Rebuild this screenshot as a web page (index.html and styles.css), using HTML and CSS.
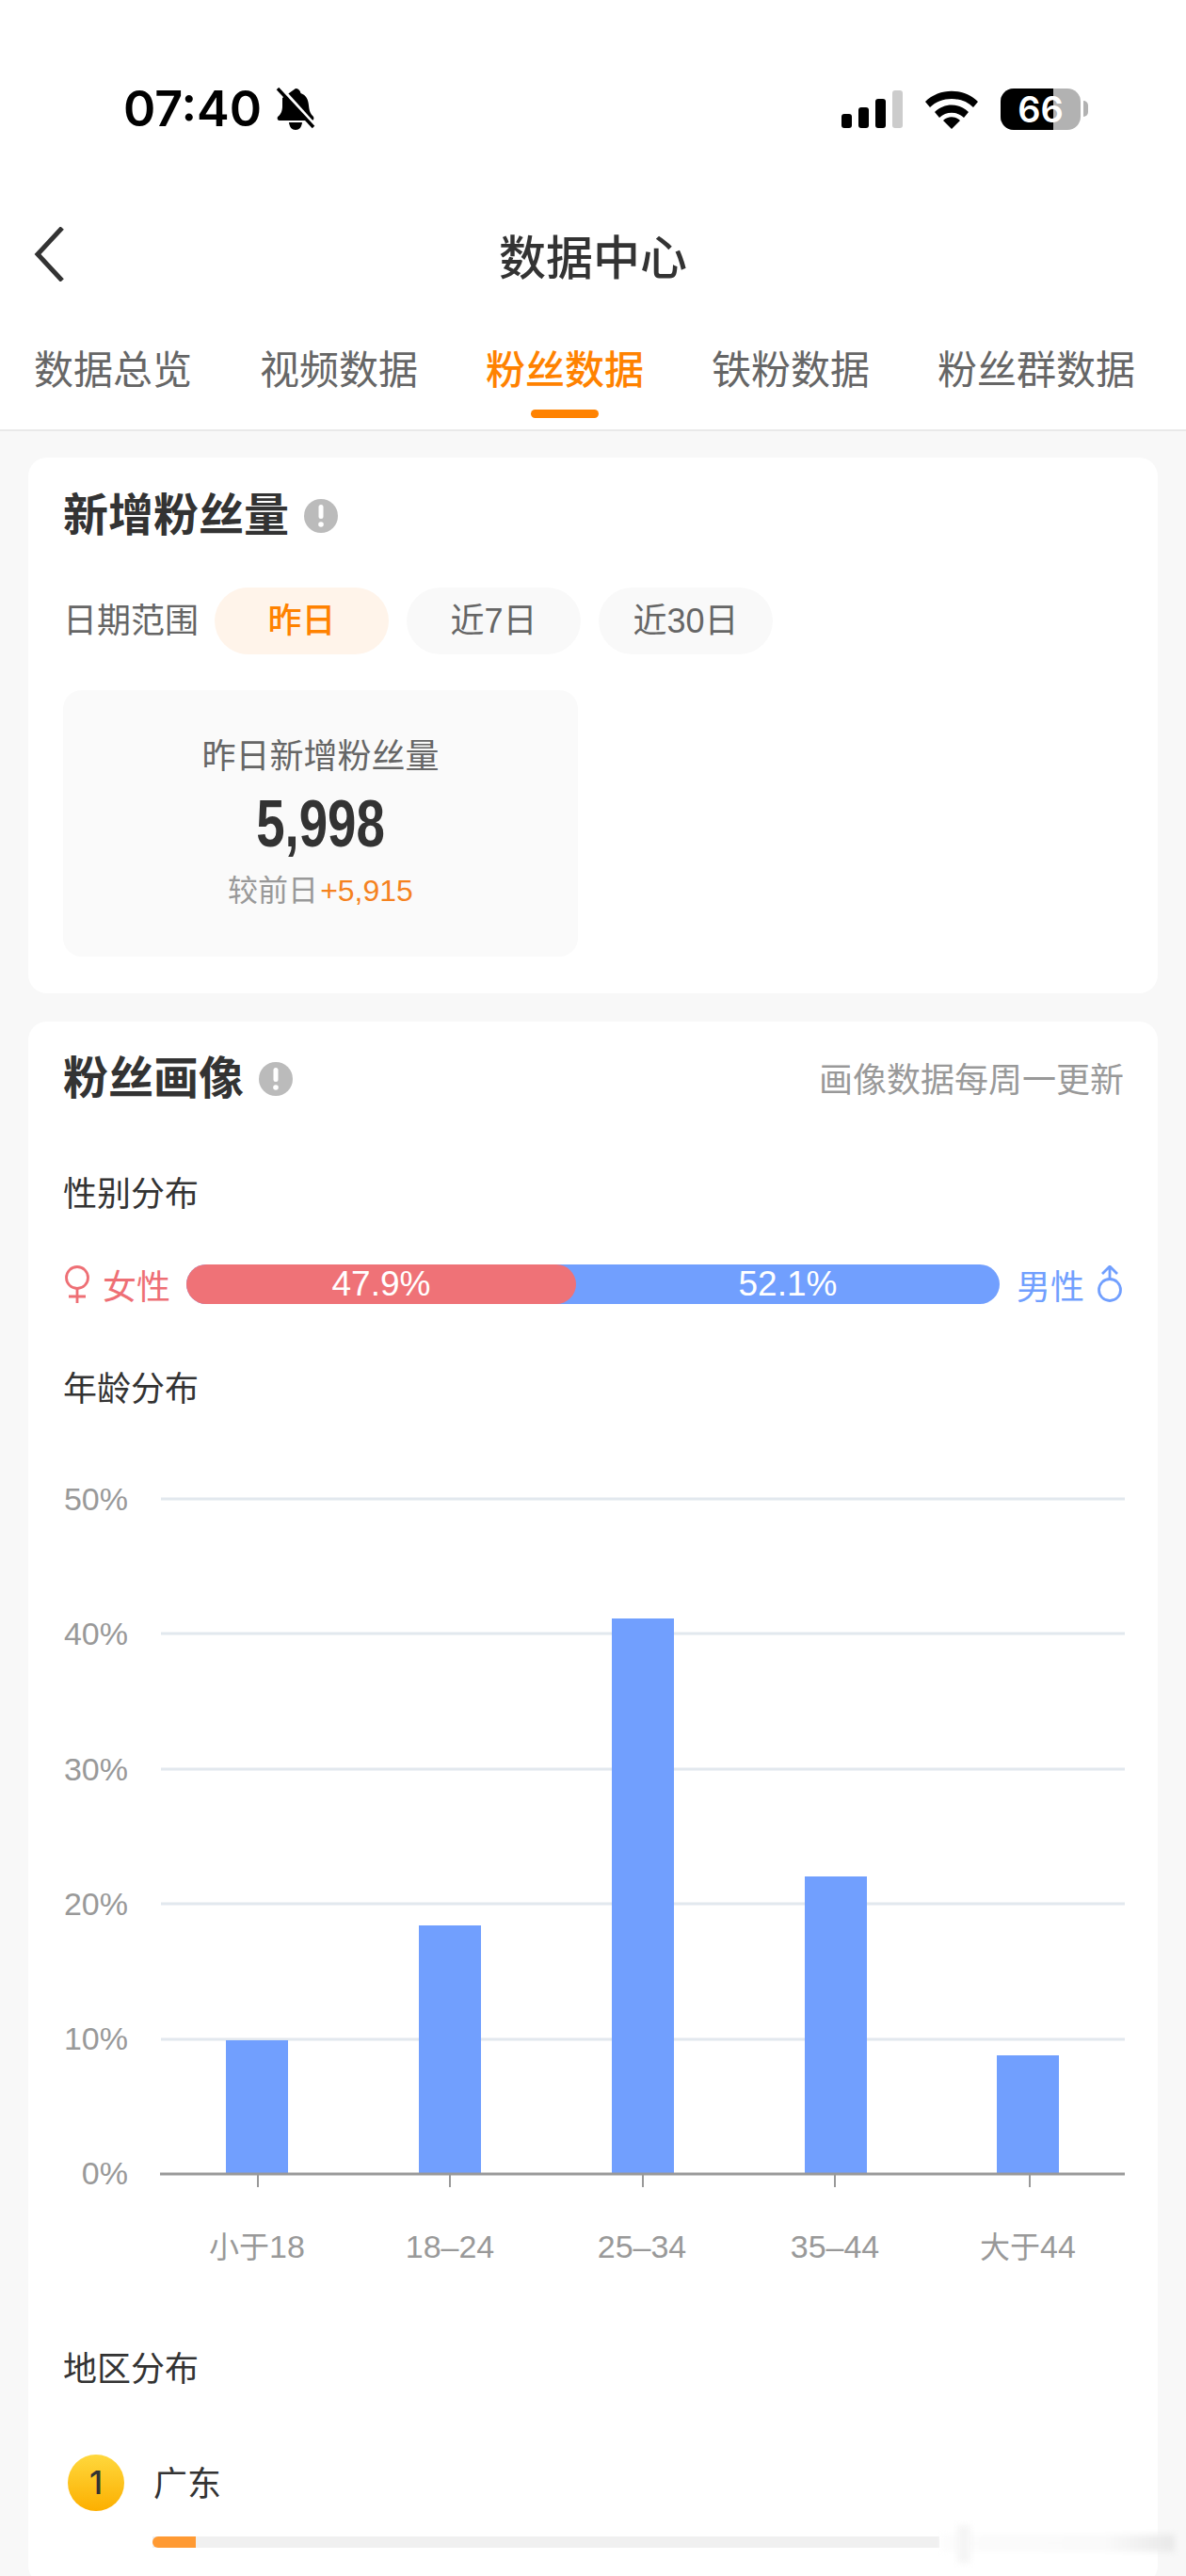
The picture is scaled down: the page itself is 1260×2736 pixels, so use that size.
FILE: index.html
```html
<!DOCTYPE html>
<html lang="zh-CN">
<head>
  <meta charset="UTF-8" />
  <meta name="viewport" content="width=device-width, initial-scale=1.0" />
  <title>数据中心</title>
  <link rel="stylesheet" href="styles.css">
</head>
<body>
  <div class="status-bar">
    <div class="status-left">
      <span class="time">07:40</span>
      <svg class="bell" width="42" height="46" viewBox="0 0 42 46">
        <path d="M21 1c3 0 5 2 5.500 5 6 2 8 7 8.500 13 .5 6 2 9 5 12 1 2 0 4-2 4H4c-2 0-3-2-2-4 3-2 5-6 5-11V11z" fill="#000"/>
        <path d="M14 37h14c-.5 5-3 8-7 8s-6.500-3-7-8z" fill="#000"/>
        <path d="M5 0l37 41" stroke="#fff" stroke-width="4"/>
        <path d="M2 1l38 41" stroke="#000" stroke-width="3.500"/>
      </svg>
    </div>
    <div class="status-right">
      <svg width="65" height="40" viewBox="0 0 65 40">
        <rect x="0" y="25" width="11" height="15" rx="3" fill="#000"/>
        <rect x="18" y="18" width="11" height="22" rx="3" fill="#000"/>
        <rect x="36" y="9" width="11" height="31" rx="3" fill="#000"/>
        <rect x="54" y="0" width="11" height="40" rx="3" fill="#ccc"/>
      </svg>
      <svg width="58" height="42" viewBox="0 0 58 42">
        <path d="M1 13C16-2 42-2 57 13l-5 6C40 7 18 7 6 19z" fill="#000"/>
        <path d="M11 24c10-10 26-10 36 0l-5 6c-7-7-19-7-26 0z" fill="#000"/>
        <path d="M20 33c5-5 13-5 18 0l-9 9z" fill="#000"/>
      </svg>
      <div class="battery">
        <div class="battery-fill"></div>
        <span class="battery-num">66</span>
      </div>
      <div class="battery-nub"></div>
    </div>
  </div>

  <div class="nav-bar">
    <svg class="back" width="32" height="58" viewBox="0 0 32 58">
      <path d="M30 1L4 29l26 28" fill="none" stroke="#333" stroke-width="5"/>
    </svg>
    <span class="nav-title">数据中心</span>
  </div>

  <div class="tabs">
    <span class="tab">数据总览</span>
    <span class="tab">视频数据</span>
    <span class="tab tab-active">粉丝数据</span>
    <span class="tab">铁粉数据</span>
    <span class="tab">粉丝群数据</span>
  </div>

  <main class="content">
    <section class="card card-new">
      <div class="card-head">
        <h2>新增粉丝量</h2>
        <svg class="info" width="36" height="36" viewBox="0 0 36 36">
          <circle cx="18" cy="18" r="18" fill="#bbb"/>
          <rect x="15.500" y="6" width="5" height="15" rx="2.500" fill="#fff"/>
          <circle cx="18" cy="27" r="2.800" fill="#fff"/>
        </svg>
      </div>
      <div class="filter-row">
        <span class="filter-label">日期范围</span>
        <span class="pill pill-active">昨日</span>
        <span class="pill">近7日</span>
        <span class="pill">近30日</span>
      </div>
      <div class="stat-box">
        <div class="stat-label">昨日新增粉丝量</div>
        <div class="stat-num">5,998</div>
        <div class="stat-sub">较前日<span class="up">+5,915</span></div>
      </div>
    </section>

    <section class="card card-fans">
      <div class="card-head">
        <h2>粉丝画像</h2>
        <svg class="info" width="36" height="36" viewBox="0 0 36 36">
          <circle cx="18" cy="18" r="18" fill="#bbb"/>
          <rect x="15.500" y="6" width="5" height="15" rx="2.500" fill="#fff"/>
          <circle cx="18" cy="27" r="2.800" fill="#fff"/>
        </svg>
        <span class="head-note">画像数据每周一更新</span>
      </div>

      <h3 class="sub-title sub-gender">性别分布</h3>
      <div class="gender-row">
        <svg class="sex-icon" width="28" height="40" viewBox="0 0 28 40">
          <circle cx="14" cy="13" r="11.500" fill="none" stroke="#ee6f75" stroke-width="2.800"/>
          <path d="M14 25v15M5 33h18" fill="none" stroke="#ee6f75" stroke-width="2.800"/>
        </svg>
        <span class="sex-text female">女性</span>
        <div class="gender-bar">
          <div class="seg-female">47.9%</div>
          <div class="seg-male">52.1%</div>
        </div>
        <span class="sex-text male">男性</span>
        <svg class="sex-icon" width="28" height="40" viewBox="0 0 28 40">
          <circle cx="14" cy="26" r="11.500" fill="none" stroke="#719ffe" stroke-width="2.800"/>
          <path d="M14 15V2M6 9l8-8 8 8" fill="none" stroke="#719ffe" stroke-width="2.800"/>
        </svg>
      </div>

      <h3 class="sub-title sub-age">年龄分布</h3>
      <svg class="age-chart" width="1200" height="989" viewBox="30 1501 1200 989">
        <g class="grid">
          <line x1="171" x2="1195" y1="1592" y2="1592"/>
          <line x1="171" x2="1195" y1="1735" y2="1735"/>
          <line x1="171" x2="1195" y1="1879" y2="1879"/>
          <line x1="171" x2="1195" y1="2022" y2="2022"/>
          <line x1="171" x2="1195" y1="2166" y2="2166"/>
        </g>
        <g class="bars">
          <rect x="240" y="2167" width="66" height="142"/>
          <rect x="445" y="2045" width="66" height="264"/>
          <rect x="650" y="1719" width="66" height="590"/>
          <rect x="855" y="1993" width="66" height="316"/>
          <rect x="1059" y="2183" width="66" height="126"/>
        </g>
        <g class="axis">
          <line class="axis-main" x1="170" x2="1195" y1="2309" y2="2309"/>
          <line x1="274" x2="274" y1="2309" y2="2323"/>
          <line x1="478" x2="478" y1="2309" y2="2323"/>
          <line x1="683" x2="683" y1="2309" y2="2323"/>
          <line x1="887" x2="887" y1="2309" y2="2323"/>
          <line x1="1094" x2="1094" y1="2309" y2="2323"/>
        </g>
        <g class="y-labels">
          <text x="136" y="1604">50%</text>
          <text x="136" y="1747">40%</text>
          <text x="136" y="1891">30%</text>
          <text x="136" y="2034">20%</text>
          <text x="136" y="2177">10%</text>
          <text x="136" y="2320">0%</text>
        </g>
        <g class="x-labels">
          <text x="273" y="2398"><tspan class="cjk">小于</tspan>18</text>
          <text x="478" y="2398">18–24</text>
          <text x="682" y="2398">25–34</text>
          <text x="887" y="2398">35–44</text>
          <text x="1092" y="2398"><tspan class="cjk">大于</tspan>44</text>
        </g>
      </svg>

      <h3 class="sub-title sub-area">地区分布</h3>
      <div class="area-item">
        <span class="rank">1</span>
        <span class="area-name">广东</span>
      </div>
      <div class="area-track"><div class="area-fill"></div></div>
    </section>
  </main>

  <!-- blurred watermark left on the screenshot -->
  <div class="smudge smudge-bar"></div>
  <div class="smudge smudge-tick"></div>
</body>
</html>
```

FILE: styles.css
```css
body {
  margin: 0;
  width: 1260px;
  height: 2736px;
  overflow: hidden;
  position: relative;
  background-color: #f8f8f8;
  font-family: "Liberation Sans", "Noto Sans CJK SC", sans-serif;
  color: #333;
}

/* status bar */
.status-bar {
  display: flex;
  justify-content: space-between;
  align-items: center;
  height: 228px;
  box-sizing: border-box;
  padding: 3px 104px 0 131px;
  background-color: #fff;
}
.status-left,
.status-right {
  display: flex;
  align-items: center;
}
.status-right {
  gap: 23px;
}
.time {
  font-family: Inter, sans-serif;
  font-size: 52px;
  font-weight: 600;
  color: #000;
  line-height: 60px;
}
.bell {
  margin-left: 15px;
}
.battery {
  position: relative;
  width: 85px;
  height: 44px;
  border-radius: 14px;
  overflow: hidden;
  background-color: #b2b2b2;
}
.battery-fill {
  width: 56px;
  height: 44px;
  background-color: #000;
}
.battery-num {
  position: absolute;
  top: 0;
  left: 0;
  width: 85px;
  text-align: center;
  font-family: Inter, sans-serif;
  font-size: 38px;
  font-weight: 600;
  line-height: 44px;
  color: #fff;
}
.battery-nub {
  width: 5px;
  height: 17px;
  margin-left: -20px;
  border-radius: 0 8px 8px 0;
  background-color: #b2b2b2;
}

/* nav */
.nav-bar {
  position: relative;
  height: 84px;
  display: flex;
  align-items: center;
  justify-content: center;
  background-color: #fff;
}
.back {
  position: absolute;
  left: 36px;
  top: 13px;
}
.nav-title {
  font-size: 50px;
  font-weight: 500;
  color: #333;
}

/* tabs */
.tabs {
  display: flex;
  gap: 72px;
  padding: 52px 0 32px 36px;
  border-bottom: 2px solid #e9e9e9;
  background-color: #fff;
}
.tab {
  position: relative;
  font-size: 42px;
  line-height: 60px;
  color: #666;
}
.tab-active {
  color: #ff8200;
  font-weight: 500;
}
.tab-active::after {
  content: "";
  position: absolute;
  left: 48px;
  top: 71px;
  width: 72px;
  height: 9px;
  border-radius: 5px;
  background-color: #ff8200;
}

/* cards */
.content {
  padding: 28px 30px 0;
}
.card {
  box-sizing: border-box;
  background-color: #fff;
  border-radius: 20px;
  padding: 32px 37px 39px;
}
.card-fans {
  margin-top: 30px;
  padding-top: 31px;
}
.card-head {
  display: flex;
  align-items: center;
  height: 60px;
}
.card-head h2 {
  margin: 0;
  font-size: 48px;
  font-weight: 700;
  line-height: 60px;
  color: #333;
}
.info {
  flex: none;
  margin-left: 16px;
}
.head-note {
  margin: -4px -1px 0 auto;
  font-size: 36px;
  color: #999;
}

.filter-row {
  display: flex;
  align-items: center;
  gap: 19px;
  margin-top: 46px;
}
.filter-label {
  width: 142px;
  font-size: 36px;
  line-height: 66px;
  color: #666;
  white-space: nowrap;
}
.pill {
  width: 185px;
  height: 71px;
  border-radius: 36px;
  background-color: #f9f9f9;
  font-size: 36px;
  line-height: 71px;
  text-align: center;
  color: #666;
}
.pill-active {
  background-color: #fff4ea;
  color: #ff8200;
  font-weight: 500;
}

.stat-box {
  box-sizing: border-box;
  width: 547px;
  height: 283px;
  margin-top: 38px;
  padding-top: 46px;
  border-radius: 20px;
  background-color: #fafafa;
  text-align: center;
}
.stat-label {
  font-size: 36px;
  line-height: 50px;
  color: #666;
}
.stat-num {
  margin-top: 11px;
  font-size: 70px;
  font-weight: 700;
  line-height: 70px;
  color: #333;
  transform: scaleX(0.78);
}
.stat-sub {
  margin-top: 14px;
  font-size: 32px;
  line-height: 44px;
  color: #999;
}
.up {
  margin-left: 2px;
  color: #f5821f;
}

.sub-title {
  margin: 0;
  font-size: 36px;
  font-weight: 400;
  line-height: 50px;
  color: #333;
}
.sub-gender {
  margin-top: 68px;
}
.sub-age {
  margin-top: 66px;
}
.sub-area {
  margin-top: 2px;
}

/* gender */
.gender-row {
  display: flex;
  align-items: center;
  height: 42px;
  margin-top: 49px;
}
.sex-icon {
  flex: none;
  margin-left: 1px;
}
.sex-text {
  flex: none;
  font-size: 36px;
}
.female {
  margin-left: 13px;
  color: #ee6f75;
}
.male {
  margin-left: 18px;
  margin-right: 12px;
  color: #719ffe;
}
.gender-bar {
  display: flex;
  flex: 1;
  height: 42px;
  margin-left: 17px;
  border-radius: 21px;
  background-color: #719ffe;
  color: #fff;
  font-size: 37px;
  line-height: 42px;
  text-align: center;
}
.seg-female {
  width: 414px;
  border-radius: 21px;
  background-color: #ef7277;
}
.seg-male {
  flex: 1;
}

/* age chart */
.age-chart {
  display: block;
  margin-left: -37px;
}
.grid line {
  stroke: #e2e8ee;
  stroke-width: 3;
}
.bars rect {
  fill: #719ffe;
}
.axis line {
  stroke: #999;
  stroke-width: 2;
}
.axis .axis-main {
  stroke-width: 3;
}
.y-labels text {
  fill: #999;
  font-size: 34px;
  text-anchor: end;
}
.x-labels text {
  fill: #999;
  font-size: 34px;
  text-anchor: middle;
}
.x-labels .cjk {
  font-size: 32px;
}

/* area */
.area-item {
  display: flex;
  align-items: center;
  height: 60px;
  margin-top: 65px;
  margin-left: 5px;
}
.rank {
  width: 60px;
  height: 60px;
  border-radius: 50%;
  background: linear-gradient(#ffd83d, #fcaf00);
  font-family: Inter, sans-serif;
  font-size: 34px;
  font-weight: 500;
  line-height: 60px;
  text-align: center;
  color: #333;
}
.area-name {
  margin: -4px 0 0 31px;
  font-size: 36px;
  color: #333;
}
.area-track {
  width: 836px;
  height: 12px;
  margin: 27px 0 0 95px;
  background-color: #f0f0f0;
}
.area-fill {
  width: 46px;
  height: 12px;
  border-radius: 6px 0 0 6px;
  background-color: #ff9a33;
}

.smudge {
  position: absolute;
  filter: blur(3px);
}
.smudge-bar {
  left: 1000px;
  top: 2692px;
  width: 248px;
  height: 18px;
  background: linear-gradient(90deg, #fcfcfc, #fafafa 70%, #e8e8e8);
}
.smudge-tick {
  left: 1017px;
  top: 2682px;
  width: 14px;
  height: 40px;
  background-color: #f5f5f5;
}
```
